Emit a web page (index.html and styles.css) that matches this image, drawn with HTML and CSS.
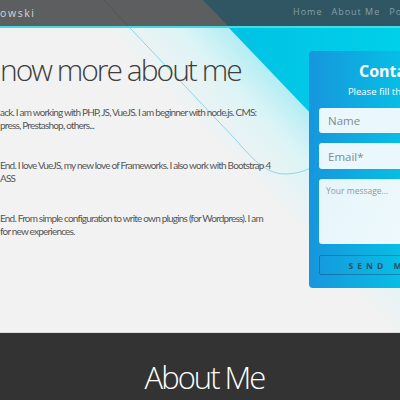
FILE: index.html
```html
<!DOCTYPE html>
<html lang="en">
<head>
<meta charset="utf-8">
<title>About me</title>
<link rel="stylesheet" href="styles.css">
</head>
<body>
<div class="top">
  <svg class="bg" viewBox="0 0 400 332" preserveAspectRatio="none" aria-hidden="true">
    <defs>
      <linearGradient id="haze" gradientUnits="userSpaceOnUse" x1="229" y1="28" x2="164" y2="90">
        <stop offset="0" stop-color="#b3edf4"/>
        <stop offset="0.4" stop-color="#dcf4f6"/>
        <stop offset="1" stop-color="#f2f2f2"/>
      </linearGradient>
      <linearGradient id="sea" gradientUnits="userSpaceOnUse" x1="229" y1="28" x2="400" y2="28">
        <stop offset="0" stop-color="#00c2e4"/>
        <stop offset="1" stop-color="#00d0ea"/>
      </linearGradient>
    </defs>
    <rect width="400" height="332" fill="url(#haze)"/>
    <polygon points="229,28 400,28 400,207" fill="url(#sea)"/>
    <rect width="400" height="26" fill="#5c5e60"/>
    <polygon points="203,0 400,0 400,26 228,26" fill="#2f5662"/>
    <line x1="104" y1="0" x2="128" y2="26" stroke="#515457" stroke-width="1"/>
    <rect y="26" width="400" height="2" fill="#45dbe5"/>
    <path d="M130 28 L236 140 C250 156 265 174 285 174 C296 174 305 171 315 166" fill="none" stroke="#86d9e8" stroke-width="1"/>
  </svg>

  <header class="header">
    <span class="brand">owski</span>
    <nav class="nav">
      <a href="#">Home</a>
      <a href="#">About Me</a>
      <a href="#">Portfolio</a>
      <a href="#">Contact</a>
    </nav>
  </header>

  <main class="hero">
    <section class="intro">
      <h1>now more about me</h1>
      <p>ack. I am working with PHP, JS, VueJS. I am beginner with node.js. CMS: press, Prestashop, others...</p>
      <p>End. I love VueJS, my new love of Frameworks. I also work with Bootstrap 4 ASS</p>
      <p>End. From simple configuration to write own plugins (for Wordpress). I am for new experiences.</p>
    </section>

    <aside class="card">
      <h2 class="card-title">Contact Me</h2>
      <p class="card-sub">Please fill this form below</p>
      <form class="form">
        <input class="field" type="text" placeholder="Name">
        <input class="field field-email" type="email" placeholder="Email*">
        <textarea class="field field-msg" placeholder="Your message..."></textarea>
        <button class="send" type="button">SEND MESSAGE</button>
      </form>
    </aside>
  </main>
</div>

<section class="about">
  <h2 class="about-title">About Me</h2>
</section>
</body>
</html>
```
FILE: styles.css
```css
html, body {
  margin: 0;
  overflow: hidden;
}

body {
  width: 400px;
  height: 400px;
  background: #333333;
  font-family: "Open Sans", "Noto Sans", sans-serif;
}

.top {
  position: relative;
  height: 332px;
  overflow: hidden;
}

.bg {
  position: absolute;
  left: 0;
  top: 0;
  width: 400px;
  height: 332px;
  z-index: 0;
}

.header,
.hero {
  position: relative;
  z-index: 1;
}

.header {
  height: 26px;
  display: grid;
  grid-template-columns: 293px max-content;
  align-items: center;
}

.brand {
  font-size: 10.5px;
  letter-spacing: 1.6px;
  color: #d3d6d8;
}

.nav {
  display: flex;
  gap: 9px;
  white-space: nowrap;
  margin-bottom: 3px;
}

.nav a {
  font-size: 9px;
  letter-spacing: 1px;
  color: #84a0a9;
  text-decoration: none;
}

.hero {
  display: flex;
  align-items: flex-start;
  height: 306px;
}

.intro {
  flex: 0 0 273px;
  padding-top: 24px;
  color: #555555;
}

.intro h1 {
  margin: 0 0 16px;
  font-size: 30px;
  font-weight: 300;
  line-height: 40px;
  letter-spacing: -2px;
  color: #3d3d3d;
  white-space: nowrap;
}

.intro p {
  margin: 0 0 27px;
  font-family: Lato, "Open Sans", sans-serif;
  font-size: 10px;
  line-height: 13px;
  letter-spacing: -0.8px;
  color: #555555;
}

.card {
  flex: 0 0 188px;
  box-sizing: border-box;
  margin: 25px 0 0 36px;
  padding: 10px 10px 13px;
  border-radius: 4px;
  background: linear-gradient(90deg, #1796dd 0%, #05c4e5 55%, #00d0e8 100%);
  color: #ffffff;
  text-align: center;
}

.card-title {
  margin: 0;
  font-size: 16px;
  font-weight: 700;
  line-height: 20px;
}

.card-sub {
  margin: 4px 0 10px;
  font-size: 9.5px;
  line-height: 13px;
}

.form {
  display: flex;
  flex-direction: column;
  gap: 10px;
}

.field {
  box-sizing: border-box;
  height: 25px;
  padding: 0 9px;
  border: none;
  border-radius: 3px;
  background: #eaf7fc;
  font-family: "Open Sans", sans-serif;
  font-size: 11.5px;
  color: #333333;
  outline: none;
}

.field::placeholder {
  color: #7f8b93;
}

.field-email {
  height: 26px;
}

.field-msg {
  height: 65px;
  padding: 6px 7px;
  font-size: 8.5px;
  resize: none;
  background: linear-gradient(120deg, #e6f5fb 0%, #eef9fc 60%, #e3f4fa 100%);
}

.field-msg::placeholder {
  color: #8c99a2;
}

.send {
  height: 20px;
  margin-top: 1px;
  padding: 0;
  border: 1px solid rgba(30, 70, 110, 0.45);
  border-radius: 2px;
  background: transparent;
  font-family: "Open Sans", sans-serif;
  font-size: 8.5px;
  font-weight: 700;
  letter-spacing: 4px;
  color: #28506b;
}

.about {
  height: 67px;
  border-top: 1px solid #dadada;
  background: #333333;
}

.about-title {
  margin: 0;
  padding: 24px 0 0 9px;
  text-align: center;
  font-size: 31px;
  font-weight: 300;
  line-height: 40px;
  letter-spacing: -2px;
  color: #ffffff;
}
```
